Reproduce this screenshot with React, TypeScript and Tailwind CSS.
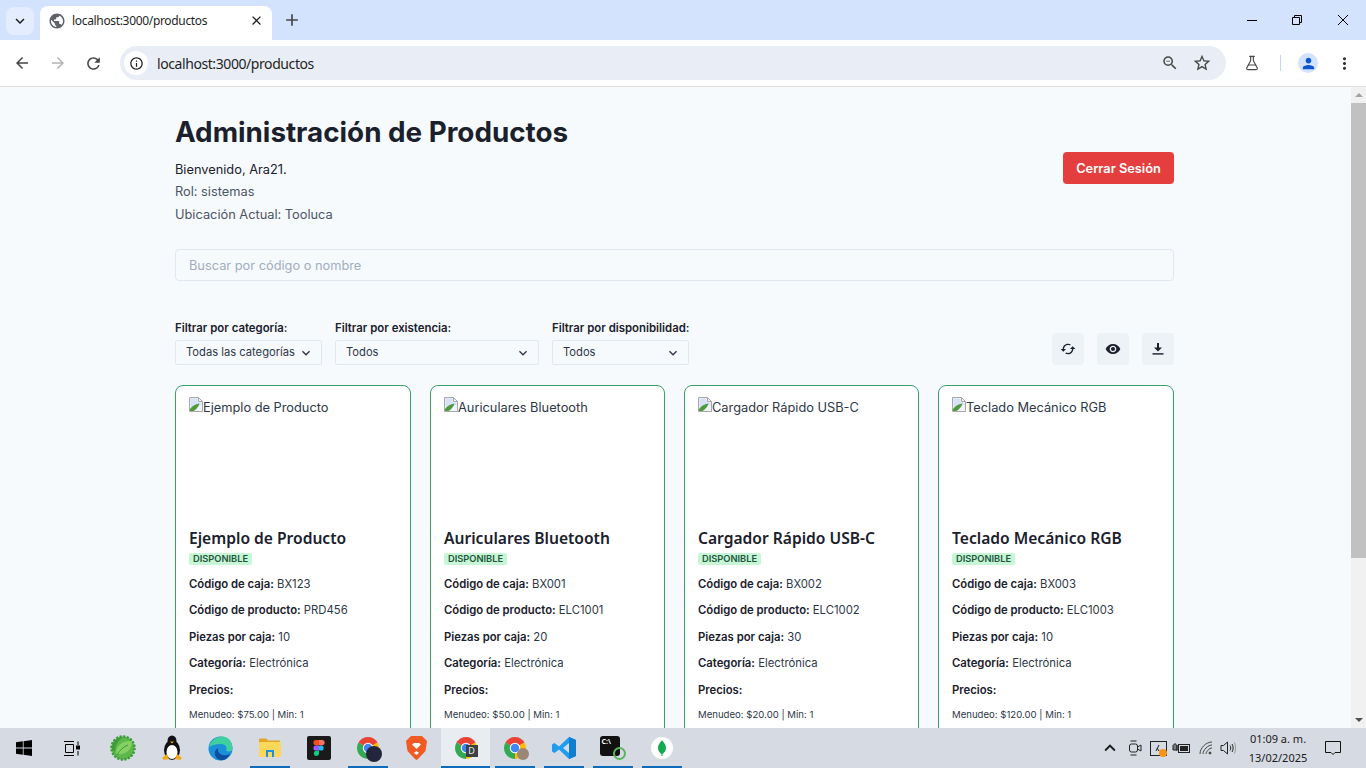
import React from "react";
import { MdArrowBack, MdArrowForward, MdRefresh, MdInfoOutline, MdPublic, MdClose, MdAdd, MdKeyboardArrowDown, MdZoomOut, MdStarBorder, MdPerson, MdMoreVert, MdSync, MdVisibility, MdKeyboardArrowUp } from "react-icons/md";
import { FlaskConical } from "lucide-react";

const Chrome = ({ size = 34 }: { size?: number }) => (
  <svg width={size} height={size} viewBox="0 0 48 48">
    <path d="M24 24L4.95 13A22 22 0 0 1 43.05 13Z" fill="#ea4335" />
    <path d="M24 24L43.05 13A22 22 0 0 1 24 46Z" fill="#fbbc04" />
    <path d="M24 24L24 46A22 22 0 0 1 4.95 13Z" fill="#34a853" />
    <circle cx="24" cy="24" r="10.5" fill="#fff" />
    <circle cx="24" cy="24" r="8.5" fill="#4285f4" />
  </svg>
);

const Slot = ({ children, line, active }: { children: React.ReactNode; line?: boolean; active?: boolean }) => (
  <div className={`relative h-10 flex items-center justify-center w-[49px] shrink-0 ${active ? "bg-[#e9ecf1]" : ""}`}>
    {children}
    {line && <div className={`absolute bottom-0 h-[2px] bg-[#0f6cbd] ${active ? "left-0 right-0" : "left-[5px] right-[4px]"}`} />}
  </div>
);

const products = [
  { name: "Ejemplo de Producto", box: "BX123", code: "PRD456", pcs: "10", price: "$75.00" },
  { name: "Auriculares Bluetooth", box: "BX001", code: "ELC1001", pcs: "20", price: "$50.00" },
  { name: "Cargador Rápido USB-C", box: "BX002", code: "ELC1002", pcs: "30", price: "$20.00" },
  { name: "Teclado Mecánico RGB", box: "BX003", code: "ELC1003", pcs: "10", price: "$120.00" },
];

const BrokenImg = () => (
  <svg width="14" height="15" viewBox="0 0 14 15" className="shrink-0">
    <path d="M.5.5H9.5L13.5 4.5V14.5H.5Z" fill="#eef3fc" stroke="#a8a8a8" />
    <path d="M9.5.5V4.5H13.5Z" fill="#f4f4f4" stroke="#a8a8a8" />
    <path d="M1.5 1.5H8.5V5.5H12.5V8L1.5 10Z" fill="#d5e2f8" />
    <path d="M1 14V12C3 9 6 7.5 10.5 6.5C9.5 10 7 12.5 4.5 14Z" fill="#4f9a3d" />
  </svg>
);

const Row = ({ label, value }: { label: string; value?: string }) => (
  <p className="text-[11.3px] leading-[16px] mb-[10.4px] text-[#2d3748]">
    <strong className="font-semibold text-[#1a202c]">{label}</strong>{value ? " " + value : ""}
  </p>
);

const Card = ({ p }: { p: (typeof products)[number] }) => (
  <div className="bg-white border border-[#38a169] rounded-lg px-[13px] pt-[11px] pb-10">
    <div className="h-[124px] flex items-start text-[12.8px] leading-[22px] text-[#2d3748]">
      <BrokenImg />
      <span>{p.name}</span>
    </div>
    <h3 className="mt-[7px] font-['Noto_Sans',sans-serif] font-semibold text-[15.6px] leading-[20px] text-[#1a202c]">{p.name}</h3>
    <span className="block w-fit mt-[5px] mb-[11px] px-[4px] rounded-[2px] bg-[#c6f6d5] text-[#22543d] text-[9.3px] leading-[12px] font-semibold">DISPONIBLE</span>
    <Row label="Código de caja:" value={p.box} />
    <Row label="Código de producto:" value={p.code} />
    <Row label="Piezas por caja:" value={p.pcs} />
    <Row label="Categoría:" value="Electrónica" />
    <Row label="Precios:" />
    <p className="mt-[1px] text-[9.6px] leading-[14px] text-[#2d3748]">Menudeo: {p.price} | Min: 1</p>
  </div>
);

const Sel = ({ label, value, w }: { label: string; value: string; w: string }) => (
  <div className="flex flex-col">
    <span className="text-[11.4px] leading-[14px] font-semibold text-[#1a202c] mb-[5px] whitespace-nowrap">{label}</span>
    <div className={`${w} h-[25px] flex items-center justify-between pl-[10px] pr-[7px] border border-[#e2e8f0] rounded-[2px] text-[11.2px] text-[#2d3748] whitespace-nowrap`}>
      <span>{value}</span>
      <MdKeyboardArrowDown size={16} className="text-[#2d3748] shrink-0" />
    </div>
  </div>
);

const IconBtn = ({ children }: { children: React.ReactNode }) => (
  <div className="w-8 h-8 rounded-[4px] bg-[#edf2f7] flex items-center justify-center text-[#1a202c]">{children}</div>
);

export default function App() {
  return (
    <div className="w-[1366px] h-[768px] overflow-hidden flex flex-col bg-white font-['Inter',sans-serif]">
      {/* tab strip */}
      <div className="h-10 shrink-0 bg-[#d3e3fd] flex items-end font-['Noto_Sans',sans-serif]">
        <div className="ml-[6px] mb-[5px] w-7 h-7 rounded-lg bg-[#e4edfd] flex items-center justify-center text-[#1f1f1f]">
          <MdKeyboardArrowDown size={18} />
        </div>
        <div className="ml-[6px] w-[232px] h-[34px] bg-white rounded-t-lg flex items-center pl-2 pr-[8px] pb-[5px] text-[12px] tracking-[-0.33px] text-[#1f1f1f]">
          <MdPublic size={18} className="text-[#5f6368]" />
          <span className="ml-[6px] flex-1">localhost:3000/productos</span>
          <MdClose size={15} className="text-[#1f1f1f]" />
        </div>
        <div className="ml-[6px] mb-[6px] w-7 h-7 flex items-center justify-center text-[#444746]"><MdAdd size={20} /></div>
        <div className="flex-1" />
        <div className="self-start h-10 flex text-[#1f1f1f]">
          <div className="w-[45px] pr-[2px] flex items-center justify-center"><div className="w-[10px] h-px bg-black" /></div>
          <div className="w-[45px] pr-[1px] flex items-center justify-center">
            <svg width="10" height="10" viewBox="0 0 10 10" fill="none" stroke="#000"><path d="M.5 2.5H7.5V9.5H.5ZM2.5 2.5V.5H9.5V7.5H7.5" /></svg>
          </div>
          <div className="w-[46px] flex items-center justify-center">
            <svg width="10" height="10" viewBox="0 0 10 10" stroke="#000"><path d="M0 0L10 10M10 0L0 10" /></svg>
          </div>
        </div>
      </div>
      {/* toolbar */}
      <div className="h-[47px] shrink-0 bg-white border-b border-[#e0e0e0] flex items-center pl-[10px] pr-[10px] text-[#444746]">
        <MdArrowBack size={18} className="ml-[3px]" />
        <MdArrowForward size={18} className="ml-[18px] text-[#b4b4b4]" />
        <MdRefresh size={19} className="ml-[17px]" />
        <div className="ml-[17px] w-[1106px] h-[34px] rounded-full bg-[#e9eef6] flex items-center pl-[4px] pr-[14px] font-['Noto_Sans',sans-serif]">
          <div className="w-6 h-6 rounded-full bg-white flex items-center justify-center text-[#1f1f1f]"><MdInfoOutline size={15} /></div>
          <span className="ml-[9px] text-[14px] tracking-[-0.42px] text-[#1f1f1f] flex-1">localhost:3000/productos</span>
          <MdZoomOut size={18} />
          <MdStarBorder size={20} className="ml-[13px]" />
        </div>
        <FlaskConical size={16} strokeWidth={1.7} className="ml-[18px]" />
        <div className="ml-[20px] w-px h-4 bg-[#c4d6f4]" />
        <div className="ml-[17px] w-5 h-5 rounded-full bg-[#d3e3fd] flex items-center justify-center text-[#0b57d0]"><MdPerson size={17} /></div>
        <MdMoreVert size={19} className="ml-[17px] text-[#303030]" />
      </div>
      {/* page */}
      <div className="flex-1 min-h-0 flex">
        <div className="flex-1 min-w-0 overflow-hidden bg-[#f7fafc]">
          <div className="w-[999px] ml-[175px] pt-[24px]">
            <div className="flex items-center justify-between">
              <div>
                <h1 className="text-[27.8px] leading-[42px] font-bold text-[#1a202c]">Administración de Productos</h1>
                <p className="mt-[6px] text-[12.8px] leading-[22px] text-[#1a202c]">Bienvenido, Ara21.</p>
                <p className="text-[12.8px] leading-[22px] text-[#4a5568]">Rol: sistemas</p>
                <p className="mt-[1px] text-[12.8px] leading-[22.5px] text-[#4a5568]">Ubicación Actual: Tooluca</p>
              </div>
              <div className="mb-[1px] w-[111px] h-8 rounded-[4px] bg-[#e53e3e] text-white text-[12.8px] font-semibold flex items-center justify-center">Cerrar Sesión</div>
            </div>
            <div className="mt-[22.5px] h-8 rounded-[4px] border border-[#e2e8f0] flex items-center px-[13px] pt-[1px] text-[12.8px] text-[#a0aec0]">Buscar por código o nombre</div>
            <div className="mt-[40px] flex items-end">
              <div className="flex gap-[13px]">
                <Sel label="Filtrar por categoría:" value="Todas las categorías" w="w-[147px]" />
                <Sel label="Filtrar por existencia:" value="Todos" w="w-[204px]" />
                <Sel label="Filtrar por disponibilidad:" value="Todos" w="w-[137px]" />
              </div>
              <div className="ml-auto flex gap-[13px]">
                <IconBtn><MdSync size={16} className="rotate-90" /></IconBtn>
                <IconBtn><MdVisibility size={16} /></IconBtn>
                <IconBtn>
                  <svg width="12" height="12" viewBox="0 0 12 12" fill="currentColor"><path d="M5 0H7V4.5H10L6 8.5L2 4.5H5Z" /><rect x="0.5" y="10.2" width="11" height="1.4" /></svg>
                </IconBtn>
              </div>
            </div>
            <div className="mt-[20px] grid grid-cols-[236px_235px_235px_236px] gap-[19px]">
              {products.map((p) => <Card key={p.name} p={p} />)}
            </div>
          </div>
        </div>
        {/* scrollbar */}
        <div className="w-[15px] shrink-0 bg-[#f1f1f1] flex flex-col items-center">
          <div className="h-4 flex items-center justify-center">
            <div className="w-0 h-0 border-x-[4px] border-x-transparent border-b-[4px] border-b-[#a3a3a3]" />
          </div>
          <div className="w-full h-[455px] bg-[#c1c1c1]" />
          <div className="flex-1" />
          <div className="h-4 flex items-center justify-center">
            <div className="w-0 h-0 border-x-[4px] border-x-transparent border-t-[4px] border-t-[#505050]" />
          </div>
        </div>
      </div>
      {/* taskbar */}
      <div className="h-10 shrink-0 bg-[#d5dae3] flex items-center font-['Noto_Sans',sans-serif]">
        <div className="w-[48px] flex justify-center">
          <svg width="16" height="16" viewBox="0 0 16 16" fill="#000"><path d="M0 2.3L6.8 1.3V7.6H0ZM7.6 1.2L16 0V7.6H7.6ZM0 8.4H6.8V14.7L0 13.7ZM7.6 8.4H16V16L7.6 14.8Z" /></svg>
        </div>
        <div className="w-[47px] flex justify-center">
          <svg width="16" height="15" viewBox="0 0 16 15" fill="none" stroke="#000" strokeWidth="1"><path d="M0 .5H10M0 14.5H10M1.5 3.5H9.5V11.5H1.5ZM14 .5V4M14 10V14.5" /><rect x="12.5" y="5" width="3" height="3" fill="#000" /></svg>
        </div>
        <div className="w-[3px]" />
        <Slot>
          <svg width="26" height="26" viewBox="0 0 26 26"><circle cx="13" cy="13" r="11.5" fill="#5db84a" /><circle cx="13" cy="13" r="11.5" fill="none" stroke="#3f9a3b" strokeWidth="2.5" strokeDasharray="2.2 1.4" /><path d="M2 14C2 7 7 2 13 2C9 5 5 9 5 17Z" fill="#3f9a3b" /><path d="M6 18C6 10 13 5.5 22 6C22 15 15 20 8 19Z" fill="#86d063" /><path d="M7 20C10 15 13 12 18 10" stroke="#3f9a3b" fill="none" /></svg>
        </Slot>
        <Slot>
          <svg width="22" height="26" viewBox="0 0 22 26"><ellipse cx="11" cy="15" rx="8" ry="10" fill="#111" /><ellipse cx="11" cy="6" rx="4.5" ry="5.5" fill="#111" /><ellipse cx="11" cy="17" rx="5.5" ry="7" fill="#fff" /><path d="M9 6.5H13L11 8.5Z" fill="#f0a91b" /><path d="M1 23L6 19L8 24L3 25ZM21 23L16 19L14 24L19 25Z" fill="#f0a91b" /></svg>
        </Slot>
        <Slot>
          <svg width="25" height="25" viewBox="0 0 25 25"><circle cx="12.5" cy="12.5" r="12" fill="#1b8fd8" /><path d="M1 11C3 3 10 .5 15 .5C21 1 24.5 6 24.5 12.5C24.5 15 22 16 18 15C20 11 17 8 13 8C8 8 4 9 1 11Z" fill="#3fd0a0" /><path d="M12 24C6 22 5 15 10 12C9 18 15 21 22 18C20 22 16 25 12 24Z" fill="#0c4f9e" /></svg>
        </Slot>
        <Slot line>
          <svg width="22" height="20" viewBox="0 0 22 20"><path d="M0 2C0 1 .5.5 1.5.5H7L9 2.5H21V6H0Z" fill="#e3a81f" /><rect x="0" y="4" width="22" height="15" rx="1" fill="#fbd75b" /><path d="M7 19V12H15V19H13V14H9V19Z" fill="#1f8fdc" /></svg>
        </Slot>
        <Slot>
          <svg width="24" height="24" viewBox="0 0 24 24"><rect width="24" height="24" rx="2" fill="#1a1a1a" /><circle cx="14" cy="12" r="2.6" fill="#1abcfe" /><path d="M9 4H12V9.2H9A2.6 2.6 0 0 1 9 4Z" fill="#f24e1e" /><path d="M12 4H15A2.6 2.6 0 0 1 15 9.2H12Z" fill="#ff7262" /><path d="M9 9.4H12V14.6H9A2.6 2.6 0 0 1 9 9.4Z" fill="#a259ff" /><path d="M9 14.8H12V17.4A2.6 2.6 0 1 1 9 14.8Z" fill="#0acf83" /></svg>
        </Slot>
        <Slot line>
          <div className="relative w-[24px] h-[24px]">
            <Chrome size={24} />
            <div className="absolute -right-[2px] -bottom-[2px] w-4 h-4 rounded-full bg-[#23263a]" />
          </div>
        </Slot>
        <Slot>
          <svg width="21" height="24" viewBox="0 0 21 24"><path d="M5 0H16L18 2L21 5L19.5 15L12 23L10.5 24L9 23L1.5 15L0 5L3 2Z" fill="#f15a22" /><path d="M10.5 13L6 8.5L8 7H13L15 8.5ZM10.5 15L8 17L10.5 19L13 17Z" fill="#fff" /></svg>
        </Slot>
        <Slot line active>
          <div className="relative w-[24px] h-[24px]">
            <Chrome size={24} />
            <div className="absolute right-0 bottom-[3px] w-3 h-3 bg-[#3c4043] text-[#e8eaed] text-[9px] leading-[12px] text-center">D</div>
          </div>
        </Slot>
        <Slot line>
          <div className="relative w-[24px] h-[24px]">
            <Chrome size={24} />
            <div className="absolute -right-[2px] bottom-0 w-3 h-3 rounded-full bg-[#9b8677]" />
          </div>
        </Slot>
        <Slot line>
          <svg width="24" height="24" viewBox="0 0 24 24"><path d="M17 1L24 4V20L17 23L7 13.5L2.5 17L0 15.5V8.5L2.5 7L7 10.5ZM17 7L11 12L17 17Z" fill="#1f9cf0" /><path d="M17 1L24 4V20L17 23Z" fill="#0e7fd0" /></svg>
        </Slot>
        <Slot line>
          <div className="relative w-[26px] h-[24px]">
            <div className="w-[20px] h-[20px] rounded-[3px] bg-[#111] text-white text-[7px] leading-[12px] pl-[2px] font-bold">C:\</div>
            <div className="absolute right-0 bottom-0 w-[13px] h-[13px] rounded-full border-[2.5px] border-[#5ab55e]" />
          </div>
        </Slot>
        <Slot line>
          <div className="w-[22px] h-[22px] rounded-full bg-white flex items-center justify-center">
            <svg width="10" height="16" viewBox="0 0 10 16"><path d="M5 0C6 2 9 4 9 8C9 11 7 13 5.5 14V16H4.5V14C3 13 1 11 1 8C1 4 4 2 5 0Z" fill="#13aa52" /></svg>
          </div>
        </Slot>
        <div className="flex-1" />
        <MdKeyboardArrowUp size={22} className="text-[#1a1a1a]" />
        <svg className="ml-[7px]" width="14" height="16" viewBox="0 0 14 16" fill="none" stroke="#222"><rect x="1.5" y="4" width="8" height="8" rx="2" /><path d="M9.5 7L13 5V11L9.5 9M2.5 1H8.5M2.5 15H8.5" /></svg>
        <div className="relative ml-[8px] w-[17px] h-[15px] border border-[#222]">
          <svg width="15" height="13" viewBox="0 0 15 13" fill="none" stroke="#222"><path d="M5 9L8 3M8 9L6 6" /></svg>
          <div className="absolute -right-[1px] -bottom-[2px] w-2 h-2 rounded-full bg-[#f7931a]" />
        </div>
        <svg className="ml-[5px]" width="18" height="12" viewBox="0 0 18 12" fill="none" stroke="#222"><path d="M1 5H5M1 7H5M3 1V3M5 3V9M1 3H5V8H1Z" /><rect x="6.5" y="2.5" width="11" height="8" /><rect x="8" y="4" width="8" height="5" fill="#222" stroke="none" /></svg>
        <svg className="ml-[9px]" width="14" height="14" viewBox="0 0 14 14" fill="none" stroke="#444"><path d="M1 13C1 7 7 1 13 1M4 13C4 9 9 4 13 4M7 13C7 11 10 7 13 7" /><circle cx="11" cy="12" r="1" fill="#222" /></svg>
        <svg className="ml-[7px]" width="16" height="14" viewBox="0 0 16 14" fill="none" stroke="#222"><path d="M1 4.5H3.5L7.5 1V13L3.5 9.5H1Z" /><path d="M10 4.5C11 6 11 8 10 9.5M12 3C13.5 5 13.5 9 12 11" /><path d="M14.5 1.5C16 5 16 9 14.5 12.5" stroke="#999" /></svg>
        <div className="ml-[9px] w-[66px] text-center text-[11px] leading-[19px] text-[#1a1a1a]">
          <div>01:09 a. m.</div>
          <div>13/02/2025</div>
        </div>
        <svg className="ml-[14px] mr-[25px]" width="16" height="16" viewBox="0 0 16 16" fill="none" stroke="#111"><path d="M.5 1.5H15.5V12.5H10L8 14.5L6 12.5H.5Z" /></svg>
      </div>
    </div>
  );
}
